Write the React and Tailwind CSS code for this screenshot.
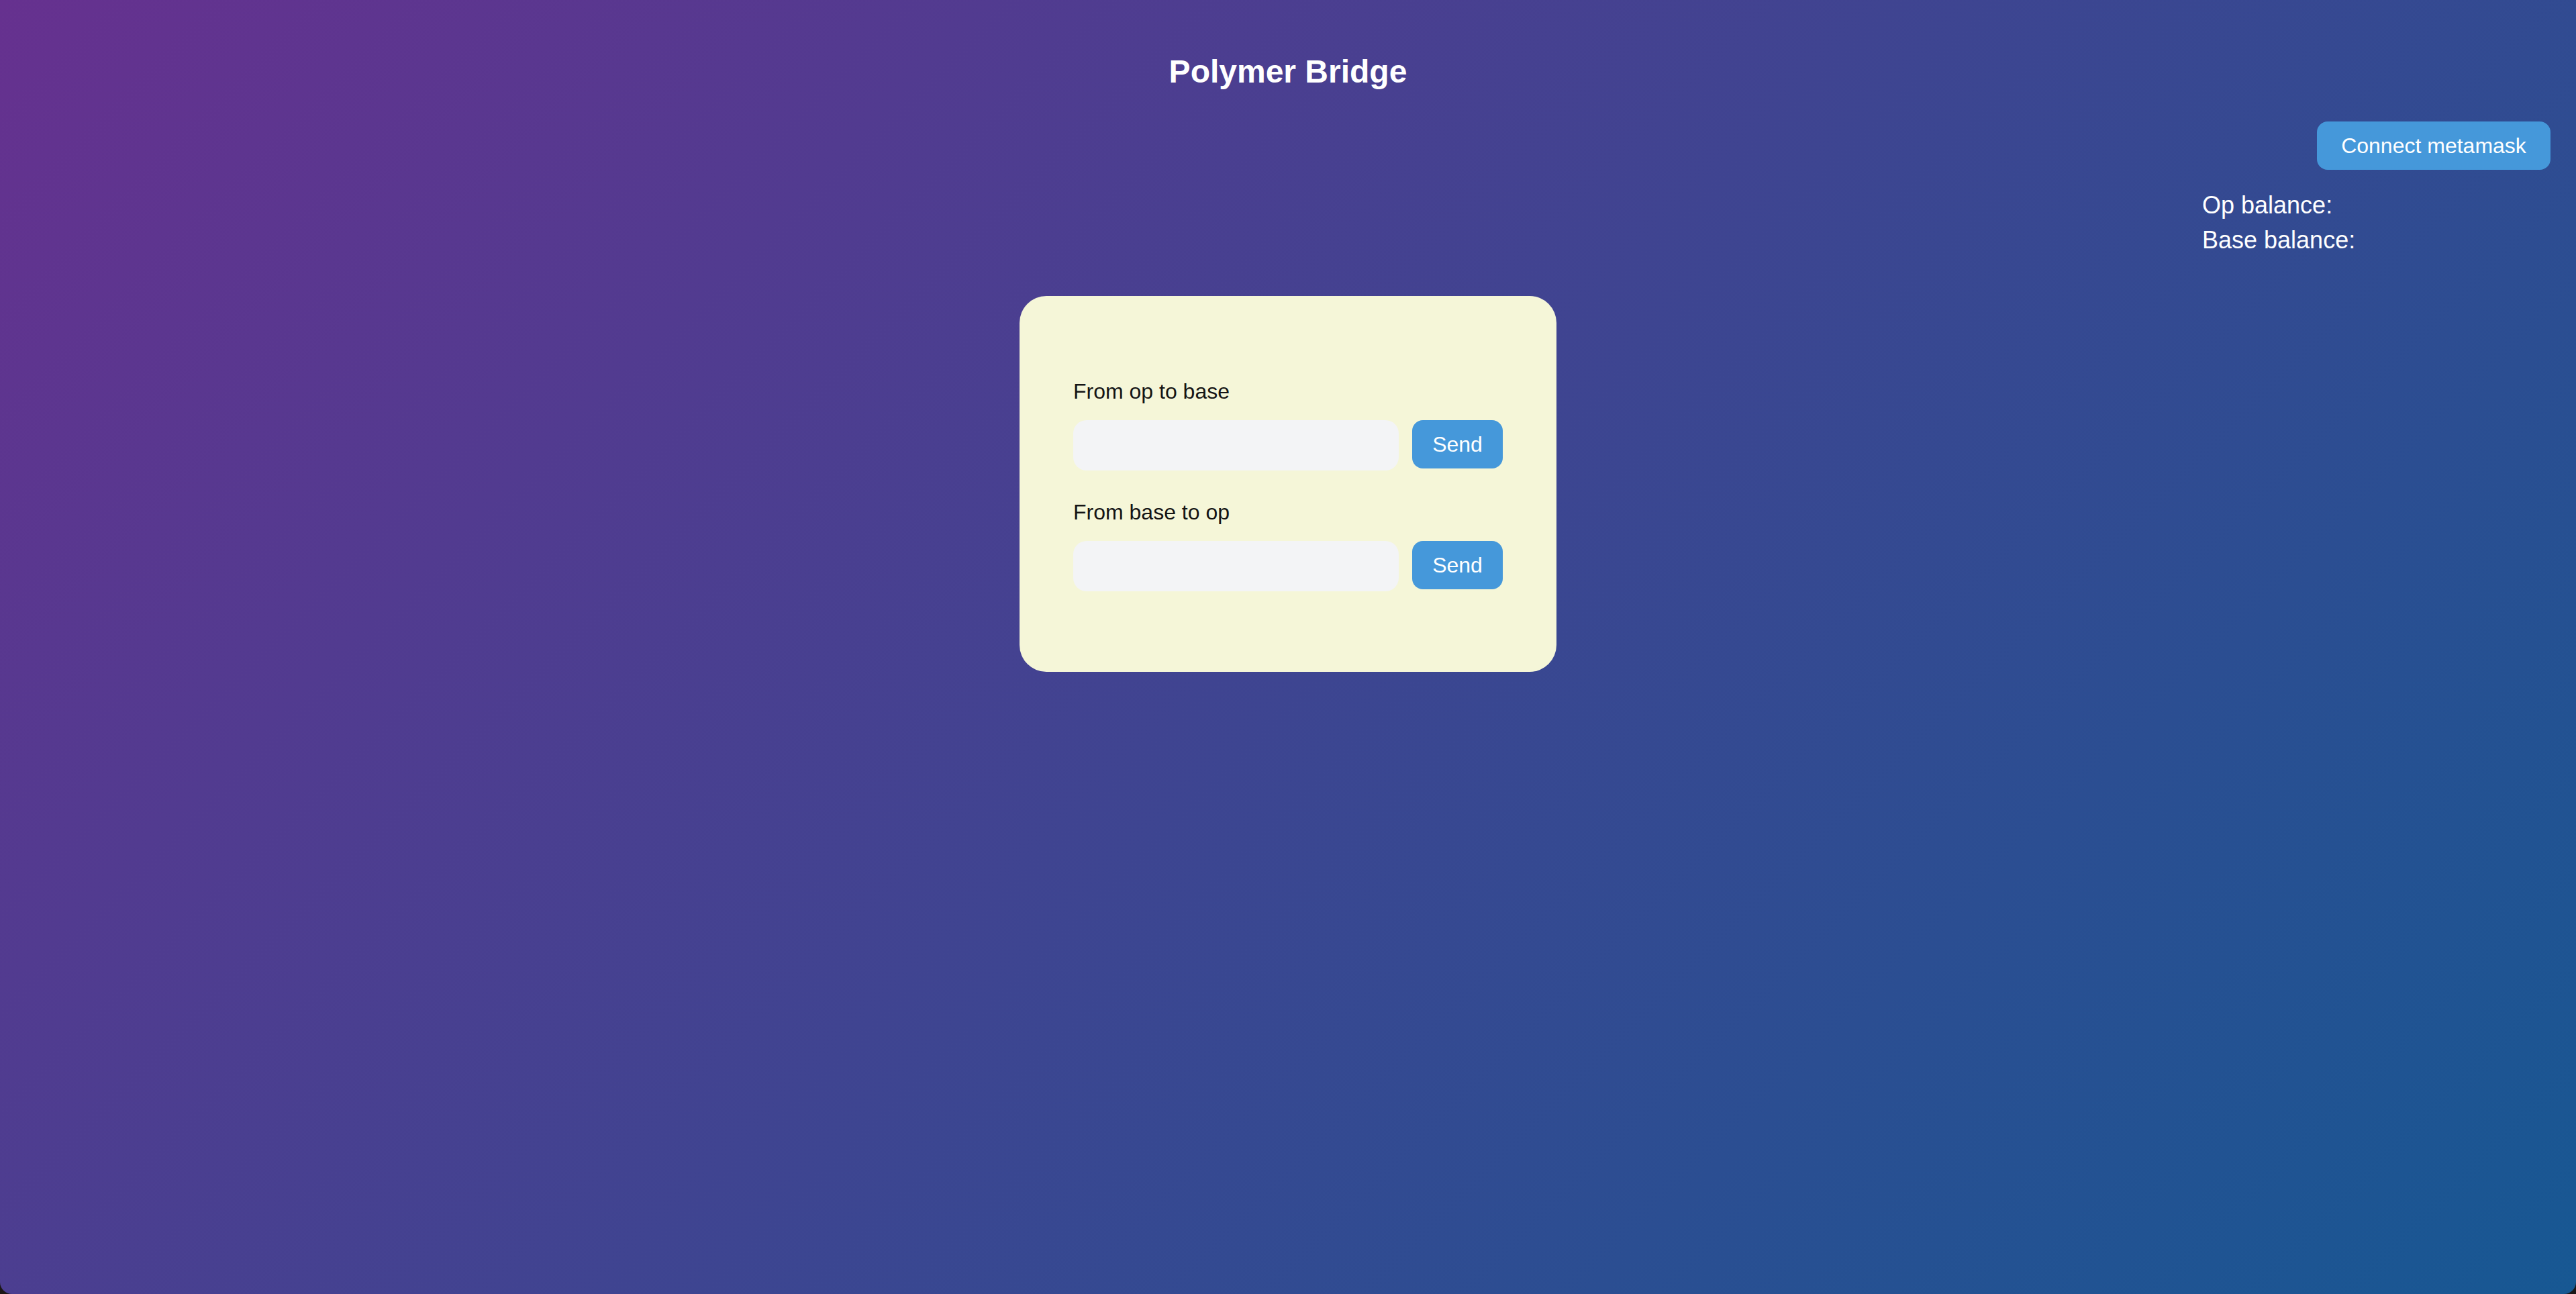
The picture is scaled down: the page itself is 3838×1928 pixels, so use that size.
import { useState } from "react";

function SendRow({ label, value, onChange }) {
  return (
    <div className="flex flex-col">
      <label className="text-[32px] leading-[48px] text-[#141414]">{label}</label>
      <div className="mt-[19px] flex items-start gap-[20px]">
        <input
          value={value}
          onChange={(e) => onChange(e.target.value)}
          className="h-[75px] w-[485px] rounded-[20px] bg-[#f3f4f6] px-6 text-[32px] text-black outline-none"
        />
        <button className="h-[72px] w-[135px] rounded-[16px] bg-[#4598da] text-[32px] text-white">
          Send
        </button>
      </div>
    </div>
  );
}

export default function App() {
  const [opAmount, setOpAmount] = useState("");
  const [baseAmount, setBaseAmount] = useState("");

  return (
    <div className="h-[1928px] w-full bg-[#1c1717]">
      <div
        className="flex h-full w-full flex-col rounded-b-[18px] bg-[linear-gradient(135deg,#66318f,#175893)] text-white"
        style={{ fontFamily: '"Liberation Sans", Arial, sans-serif' }}
      >
        <h1 className="pt-[71px] text-center text-[48px] font-bold leading-[72px]">
          Polymer Bridge
        </h1>

        <div className="mt-[38px] flex flex-col items-end pr-[38px]">
          <button className="h-[72px] w-[348px] rounded-[16px] bg-[#4598da] text-[32px] text-white">
            Connect metamask
          </button>
          <div className="mt-[27px] w-[519px] text-[36px] leading-[52px]">
            <div>Op balance:</div>
            <div>Base balance:</div>
          </div>
        </div>

        <div className="mt-[57px] flex justify-center">
          <div className="flex w-[800px] flex-col gap-[38px] rounded-[40px] bg-[#f5f6d8] px-[80px] pt-[118px] pb-[120px]">
            <SendRow label="From op to base" value={opAmount} onChange={setOpAmount} />
            <SendRow label="From base to op" value={baseAmount} onChange={setBaseAmount} />
          </div>
        </div>
      </div>
    </div>
  );
}
